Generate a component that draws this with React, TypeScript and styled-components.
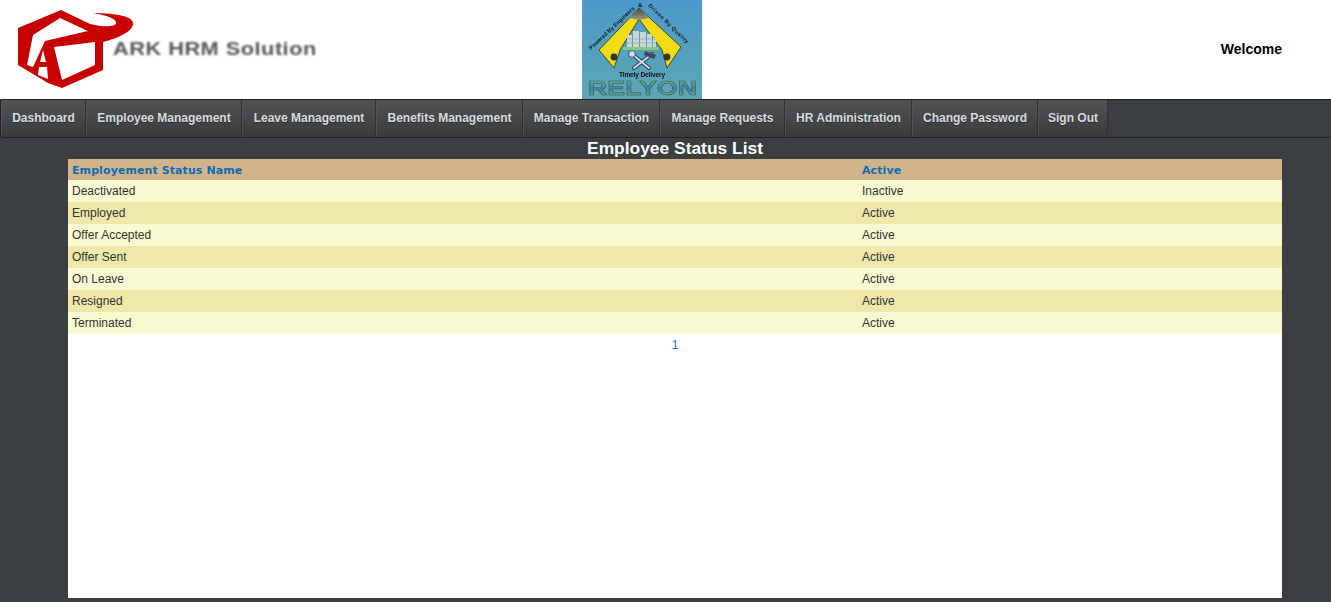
import React from "react";
import styled, { createGlobalStyle } from "styled-components";

const Global = createGlobalStyle`
  html, body { margin: 0; padding: 0; }
  body { background: #3b3f42; font-family: "Liberation Sans", Arial, sans-serif; overflow: hidden; }
`;
const Page = styled.div`width: 1331px; height: 602px; display: flex; flex-direction: column; overflow: hidden;`;
const Header = styled.header`
  height: 99px; background: #fff; display: grid;
  grid-template-columns: 582px 120px 1fr; align-items: stretch; flex: none;
`;
const Brand = styled.div`display: flex; align-items: flex-start;`;
const BrandText = styled.span`
  font: bold 18px "Liberation Sans", Arial, sans-serif; color: #555; letter-spacing: .4px;
  filter: blur(.8px); white-space: nowrap; margin: 39px 0 0 -27px;
  transform: scaleX(1.21); transform-origin: left center;
`;
const Welcome = styled.div`
  display: flex; justify-content: flex-end; align-items: center; padding: 0 49px 2px 0;
  font: bold 14px "Liberation Sans", Arial, sans-serif; color: #000;
`;
const Nav = styled.nav`
  height: 37px; flex: none; display: flex; background: #3b3e40;
  border-top: 1px solid #1f2122; border-bottom: 1px solid #1f2122; border-left: 1px solid #1f2122;
  border-radius: 4px 0 0 4px; overflow: hidden;
`;
const NavItem = styled.a`
  flex: none; width: ${p => p.$w}px; box-sizing: border-box;
  display: flex; align-items: center; justify-content: center; padding: 0 0 1px 1px;
  border-right: 1px solid #2f3133; box-shadow: inset 1px 0 0 #505254;
  background: linear-gradient(#505253, #393b3d);
  font: bold 12px "Liberation Sans", Arial, sans-serif; color: #d8dcdf; white-space: nowrap;
  text-shadow: 0 1px 0 #2a2c2e;
`;
const Title = styled.h1`
  margin: 0 0 0 68px; width: 1214px; height: 21px; text-align: center; color: #fff;
  font: bold 17.4px/21px "Liberation Sans", Arial, sans-serif; flex: none;
`;
const Panel = styled.main`width: 1214px; height: 439px; margin-left: 68px; background: #fff; flex: none;`;
const Table = styled.table`width: 100%; border-collapse: collapse; table-layout: fixed;`;
const Th = styled.th`
  height: 21px; padding: 1px 4px 0; box-sizing: border-box; background: #d2b48c; text-align: left; color: #0f6cb0;
  font: bold 11px "DejaVu Sans", Verdana, sans-serif; letter-spacing: .09px;
`;
const Row = styled.tr`background: ${p => p.$alt ? "#eee8aa" : "#fafad2"};`;
const Td = styled.td`height: 22px; padding: 0 4px; font-size: 12px; color: #333;`;
const Pager = styled.div`height: 22px; line-height: 22px; text-align: center; font-size: 12px; color: #0a70c0;`;

const ArkMark = () => (
  <svg width="140" height="99" viewBox="0 0 140 99" style={{ flex: "none" }}>
    <path
      fill="#c80000" fillRule="evenodd" style={{ filter: "blur(.4px)" }}
      d="M18 28 61 10 90 24 100 26C110 27 117 26 116 22 115 18 105 15 93 13 118 13 134 17 133 24 132 32 118 38 103 42L103 70 62 88 48 83 18 65Z
         M33 35 60 18 88 31 45 41 33 67 27 65Z
         M43 50 46 62 40 62Z
         M39 67 47 67 48 79 38 75Z
         M54 47 95 42 95 65 62 80Z"
    />
  </svg>
);

const RelyonLogo = () => (
  <svg width="120" height="99" viewBox="0 0 120 99">
    <defs>
      <linearGradient id="bg" x1="0" y1="0" x2="0" y2="1">
        <stop offset="0" stopColor="#4b9acb" /><stop offset="1" stopColor="#5da7b4" />
      </linearGradient>
      <linearGradient id="rel" x1="0" y1="0" x2="0" y2="1">
        <stop offset="0" stopColor="#86c46a" /><stop offset=".55" stopColor="#3f7fb4" /><stop offset="1" stopColor="#7fb45e" />
      </linearGradient>
      <linearGradient id="apex" x1="0" y1="0" x2="0" y2="1">
        <stop offset="0" stopColor="#4a4a4a" /><stop offset="1" stopColor="#9a9a80" />
      </linearGradient>
      <path id="arcL" d="M9 50 L54 8" /><path id="arcR" d="M66 6 L106 45" />
    </defs>
    <rect width="120" height="99" fill="url(#bg)" />
    <g style={{ filter: "blur(.3px)" }}>
      <path d="M57 8 99 47 85 68 80 50 57 19 38 50 32 68 17 50Z" fill="#f0dc14" stroke="#2a2a18" strokeWidth=".8" strokeLinejoin="round" />
      <path d="M57 8 67 18 57 20 47 18Z" fill="url(#apex)" />
      <circle cx="32" cy="57" r="3.4" fill="#333" /><circle cx="85" cy="57" r="3.4" fill="#333" />
      <path d="M41 47h36v3H41z" fill="#8cc67a" />
      <path d="M45 35h5v12h-5zM51 31h6v16h-6zM58 32h6v15h-6zM65 34h5v13h-5zM71 38h3v9h-3z" fill="#c9d6d8" />
      <path d="M45 39h29M45 43h29" stroke="#7a9aa0" strokeWidth=".6" />
      <path d="M50 54 67 68M70 54 52 68" stroke="#1e3a58" strokeWidth="3.8" strokeLinecap="round" />
      <path d="M50 54 67 68M70 54 52 68" stroke="#cfe0ea" strokeWidth="2" strokeLinecap="round" />
      <circle cx="50" cy="54" r="3.4" fill="#cfe0ea" stroke="#1e3a58" strokeWidth=".8" />
      <path d="M63 51 74 55 72 59 62 55Z" fill="#39485a" />
      <text x="60" y="77" textAnchor="middle" textLength="46" fontFamily="Liberation Sans" fontWeight="700" fontSize="6.5" fill="#0d0d0d">Timely Delivery</text>
      <text fontFamily="Liberation Sans" fontWeight="700" fontSize="5.4" fill="#111"><textPath href="#arcL" textLength="60">Powered By Engineers</textPath></text>
      <text x="56" y="7" fontFamily="Liberation Sans" fontWeight="700" fontSize="6" fill="#111">&amp;</text>
      <text fontFamily="Liberation Sans" fontWeight="700" fontSize="5.4" fill="#111"><textPath href="#arcR" textLength="54">Driven By Quality</textPath></text>
      <text x="60.5" y="95" textAnchor="middle" fontFamily="Liberation Sans" fontWeight="700" fontSize="21" textLength="109" lengthAdjust="spacingAndGlyphs" fill="url(#rel)" stroke="#2f5d50" strokeWidth=".5">RELYON</text>
    </g>
  </svg>
);

const menu: [string, number][] = [
  ["Dashboard", 85], ["Employee Management", 156], ["Leave Management", 134], ["Benefits Management", 147],
  ["Manage Transaction", 137], ["Manage Requests", 125], ["HR Administration", 127], ["Change Password", 126], ["Sign Out", 70],
];
const rows = [["Deactivated", "Inactive"], ["Employed", "Active"], ["Offer Accepted", "Active"], ["Offer Sent", "Active"], ["On Leave", "Active"], ["Resigned", "Active"], ["Terminated", "Active"]];

export default function App() {
  return (
    <Page>
      <Global />
      <Header>
        <Brand><ArkMark /><BrandText>ARK HRM Solution</BrandText></Brand>
        <RelyonLogo />
        <Welcome>Welcome</Welcome>
      </Header>
      <Nav>{menu.map(([m, w]) => <NavItem key={m} $w={w}>{m}</NavItem>)}</Nav>
      <Title>Employee Status List</Title>
      <Panel>
        <Table>
          <colgroup><col width="790" /><col /></colgroup>
          <thead><tr><Th>Employement Status Name</Th><Th>Active</Th></tr></thead>
          <tbody>
            {rows.map((r, i) => <Row key={r[0]} $alt={i % 2 === 1}><Td>{r[0]}</Td><Td>{r[1]}</Td></Row>)}
          </tbody>
        </Table>
        <Pager>1</Pager>
      </Panel>
    </Page>
  );
}
